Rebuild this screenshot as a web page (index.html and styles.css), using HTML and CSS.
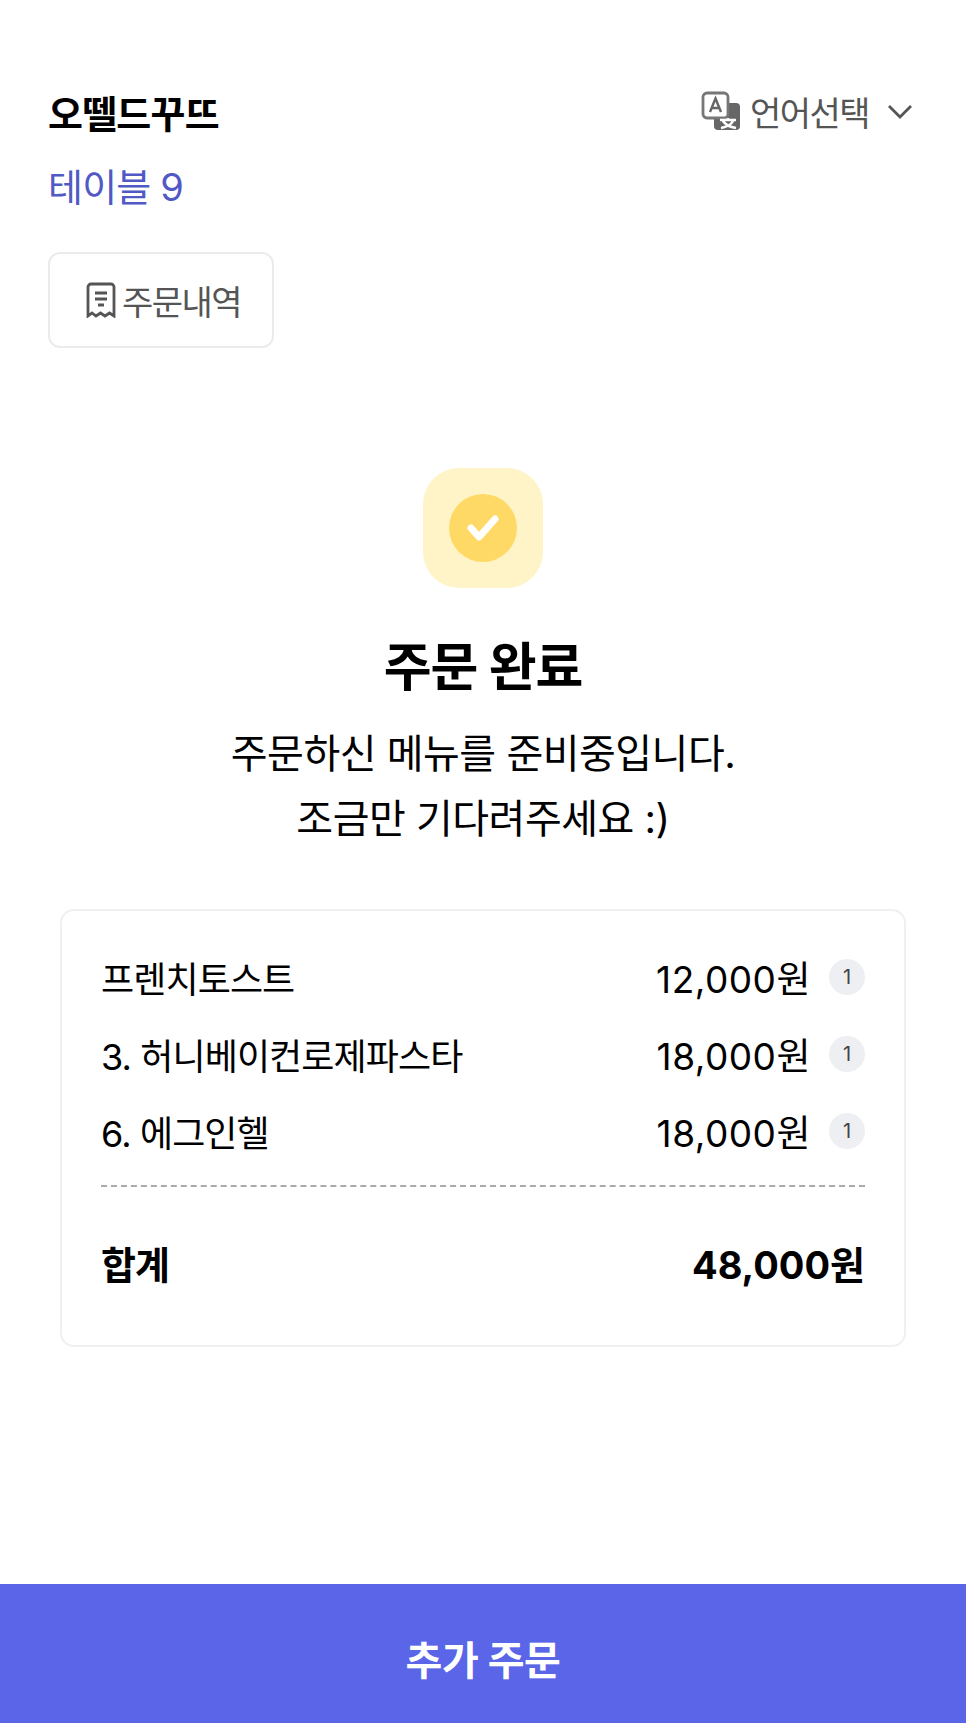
FILE: index.html
```html
<!DOCTYPE html>
<html lang="ko">
<head>
  <meta charset="UTF-8">
  <title>주문 완료</title>
  <link rel="stylesheet" href="styles.css">
</head>
<body>
  <div class="page">

    <!-- HEADER -->
    <header class="top">
      <div class="top-row">
        <h1 class="store">오뗄드꾸뜨</h1>
        <div class="lang">
          <svg class="lang-icon" viewBox="0 0 40 40" width="40" height="40">
            <rect x="13" y="12" width="26" height="27" rx="4" fill="#666"/>
            <rect x="2" y="2" width="25" height="25" rx="4" fill="#fff" stroke="#777" stroke-width="2.8"/>
            <path d="M9 21 14.500 7.500 20 21M11 17h7" fill="none" stroke="#666" stroke-width="2.400"/>
            <path d="M19 29h16M27 27v3M32 30c-2 4-6 6-12 7M22 30c2 3 7 6 13 7" fill="none" stroke="#fff" stroke-width="2.600"/>
          </svg>
          <span>언어선택</span>
          <svg class="chevron" viewBox="0 0 26 15" width="26" height="15">
            <path d="M2 2 13 13 24 2" fill="none" stroke="#555" stroke-width="2.800"/>
          </svg>
        </div>
      </div>
      <div class="table-no">테이블 9</div>
      <a class="history-btn">
        <svg viewBox="0 0 30 36" width="30" height="36">
          <path d="M2 34V5a3 3 0 0 1 3-3h20a3 3 0 0 1 3 3v29l-4.500-3-4.500 3-4.500-3-4.500 3-4-3z" fill="none" stroke="#555" stroke-width="2.800"/>
          <path d="M9 11h12M9 17h12M12 23h6" stroke="#555" stroke-width="2.800"/>
        </svg>
        <span>주문내역</span>
      </a>
    </header>

    <!-- DONE MESSAGE -->
    <section class="done">
      <div class="done-icon">
        <div class="done-circle">
          <svg viewBox="0 0 36 30" width="36" height="30">
            <path d="M6 15 14 24 30 6" fill="none" stroke="#fff" stroke-width="7" stroke-linecap="round" stroke-linejoin="round"/>
          </svg>
        </div>
      </div>
      <h2>주문 완료</h2>
      <p>주문하신 메뉴를 준비중입니다.<br>조금만 기다려주세요 :)</p>
    </section>

    <!-- ORDER CARD -->
    <section class="card">
      <ul class="items">
        <li><span class="name">프렌치토스트</span><span class="price">12,000원</span><span class="qty">1</span></li>
        <li><span class="name">3. 허니베이컨로제파스타</span><span class="price">18,000원</span><span class="qty">1</span></li>
        <li><span class="name">6. 에그인헬</span><span class="price">18,000원</span><span class="qty">1</span></li>
      </ul>
      <div class="total">
        <span class="total-label">합계</span>
        <span class="total-value">48,000원</span>
      </div>
    </section>

    <a class="more-btn">추가 주문</a>
  </div>
</body>
</html>
```

FILE: styles.css
```css
* {
  box-sizing: border-box;
}

body {
  margin: 0;
  background: #fff;
  color: #000;
  font-family: "Inter", "Noto Sans CJK KR", sans-serif;
}

.page {
  height: 1723px;
  display: flex;
  flex-direction: column;
}

/* Header */
.top {
  padding: 87px 48px 0;
}

.top-row {
  display: flex;
  justify-content: space-between;
  align-items: flex-start;
}

.store {
  margin: 0;
  font-size: 38px;
  line-height: 54px;
  font-weight: 700;
  letter-spacing: -0.800px;
}

.lang {
  display: flex;
  align-items: center;
  margin-right: 5px;
  height: 48px;
  font-size: 34px;
  letter-spacing: -1.500px;
  color: #555;
}

.lang-icon {
  margin-right: 9px;
}

.chevron {
  margin-left: 18px;
}

.table-no {
  margin-top: 21px;
  font-size: 38px;
  line-height: 50px;
  letter-spacing: -0.800px;
  color: #5059c4;
}

.history-btn {
  display: flex;
  align-items: center;
  gap: 6px;
  width: 226px;
  height: 96px;
  margin-top: 40px;
  padding-left: 36px;
  border: 2px solid #ebebeb;
  border-radius: 12px;
  font-size: 34px;
  letter-spacing: -1.500px;
  color: #555;
}

/* Done message */
.done {
  display: flex;
  flex-direction: column;
  align-items: center;
  margin-top: 120px;
}

.done-icon {
  display: flex;
  align-items: center;
  justify-content: center;
  width: 120px;
  height: 120px;
  border-radius: 36px;
  background: #fff4c8;
}

.done-circle {
  display: flex;
  align-items: center;
  justify-content: center;
  width: 68px;
  height: 68px;
  border-radius: 50%;
  background: #ffd966;
}

.done h2 {
  margin: 47px 0 0;
  font-size: 52px;
  line-height: 66px;
  font-weight: 700;
  letter-spacing: -1px;
}

.done p {
  margin: 20px 0 0;
  font-size: 40px;
  line-height: 65px;
  text-align: center;
  letter-spacing: -0.500px;
}

/* Order card */
.card {
  margin: 58px 60px 0;
  height: 438px;
  padding: 27px 39px 0;
  border: 2px solid #f0f0f0;
  border-radius: 14px;
}

.items {
  list-style: none;
  margin: 0;
  padding: 0 0 16px;
  border-bottom: 2px dashed #aaa;
}

.items li {
  display: flex;
  align-items: center;
  height: 77px;
  font-size: 36px;
  letter-spacing: -0.900px;
}

.name {
  flex: 1;
}

.price {
  font-size: 37px;
  letter-spacing: 0.500px;
}

.qty {
  display: flex;
  align-items: center;
  justify-content: center;
  width: 36px;
  height: 36px;
  margin-left: 18px;
  border-radius: 50%;
  background: #eeeff2;
  font-size: 20px;
  letter-spacing: 0;
  color: #444;
}

.total {
  display: flex;
  justify-content: space-between;
  align-items: center;
  height: 160px;
  padding-bottom: 10px;
  font-size: 38px;
  font-weight: 700;
}

.total-label {
  letter-spacing: -1px;
}

/* Bottom button */
.more-btn {
  display: flex;
  align-items: center;
  justify-content: center;
  margin-top: auto;
  height: 139px;
  padding-top: 8px;
  background: #5a65e8;
  color: #fff;
  font-size: 40px;
  font-weight: 600;
  letter-spacing: -0.500px;
}
```
